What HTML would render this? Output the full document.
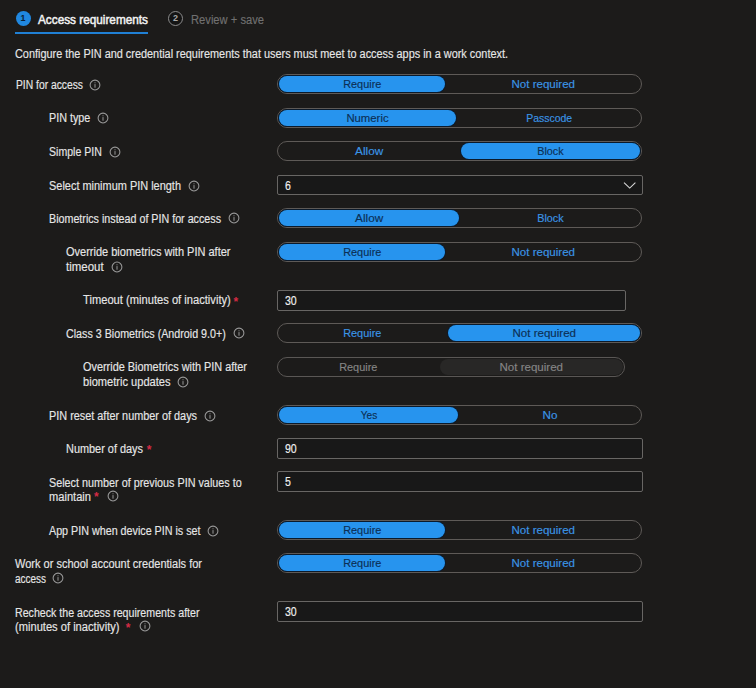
<!DOCTYPE html>
<html><head><meta charset="utf-8"><style>
html,body{margin:0;padding:0}
body{width:756px;height:688px;background:#1c1b1a;position:relative;overflow:hidden;font-family:"Liberation Sans",sans-serif}
.t{position:absolute;white-space:nowrap;line-height:14px;transform-origin:0 0;-webkit-text-stroke:0.15px currentColor}
.ic{position:absolute;width:9px;height:9px;border:1px solid #a8a8a8;border-radius:50%;box-sizing:content-box}
.ic:after{content:"";position:absolute;left:4px;top:3px;width:1px;height:4px;background:#a8a8a8}
.ic:before{content:"";position:absolute;left:4px;top:1.5px;width:1px;height:1px;background:#a8a8a8}
.st{position:absolute;color:#d52b45;font-size:12px;line-height:12px;font-weight:700}
.tg{position:absolute;height:18px;border:1px solid #5e5a57;border-radius:10px;box-sizing:content-box}
.pill{position:absolute;top:1px;height:16px;border-radius:8px;background:#2794ee;box-shadow:0 0 0 1px #0b1a2b}
.lab{position:absolute;top:0px;height:18px;line-height:18px;text-align:center;font-size:11px;color:#3b95e6;white-space:nowrap}
.lab span{display:inline-block;transform:scaleX(.9);-webkit-text-stroke:0.15px currentColor}
.in{position:absolute;height:19px;border:1px solid #686664;border-radius:2px;box-sizing:content-box;background:#181818}
.val{position:absolute;left:7px;top:1px;line-height:19px;font-size:12px;color:#f0f0f0;-webkit-text-stroke:0.15px currentColor;transform:scaleX(.88);transform-origin:0 0}
</style></head><body>

<div style="position:absolute;left:15.5px;top:11px;width:15px;height:15px;border-radius:50%;background:#2088e0"></div>
<div style="position:absolute;left:15.5px;top:10.5px;width:15px;height:15px;line-height:15px;text-align:center;font-size:9px;font-weight:700;color:#0a1f36">1</div>
<div style="position:absolute;left:15px;top:32px;width:133px;height:2px;background:#2080d4"></div>
<div style="position:absolute;left:168px;top:10.5px;width:13px;height:13px;border-radius:50%;border:1px solid #8c8c8c;box-sizing:content-box;background:#141414"></div>
<div style="position:absolute;left:168px;top:10.5px;width:15px;height:15px;line-height:15px;text-align:center;font-size:9px;color:#a8a8a8;font-weight:700">2</div>
<div class="t" style="left:38px;top:13.10px;font-size:13px;font-weight:400;color:#f2f2f2;transform:scaleX(0.9062);-webkit-text-stroke:.5px currentColor;">Access requirements</div>
<div class="t" style="left:191px;top:12.55px;font-size:12.5px;font-weight:400;color:#707070;transform:scaleX(0.8942);">Review + save</div>
<div class="t" style="left:15px;top:46.60px;font-size:12px;font-weight:400;color:#e6e6e6;transform:scaleX(0.9080);">Configure the PIN and credential requirements that users must meet to access apps in a work context.</div>
<div class="t" style="left:15.6px;top:78.00px;font-size:12px;font-weight:400;color:#e6e6e6;transform:scaleX(0.8586);">PIN for access</div>
<div class="t" style="left:48.9px;top:111.40px;font-size:12px;font-weight:400;color:#e6e6e6;transform:scaleX(0.8972);">PIN type</div>
<div class="t" style="left:48.9px;top:145.10px;font-size:12px;font-weight:400;color:#e6e6e6;transform:scaleX(0.8795);">Simple PIN</div>
<div class="t" style="left:49px;top:179.00px;font-size:12px;font-weight:400;color:#e6e6e6;transform:scaleX(0.9120);">Select minimum PIN length</div>
<div class="t" style="left:49px;top:211.80px;font-size:12px;font-weight:400;color:#e6e6e6;transform:scaleX(0.8923);">Biometrics instead of PIN for access</div>
<div class="t" style="left:66.1px;top:245.10px;font-size:12px;font-weight:400;color:#e6e6e6;transform:scaleX(0.9170);">Override biometrics with PIN after</div>
<div class="t" style="left:66px;top:260.10px;font-size:12px;font-weight:400;color:#e6e6e6;transform:scaleX(0.9553);">timeout</div>
<div class="t" style="left:82.8px;top:293.40px;font-size:12px;font-weight:400;color:#e6e6e6;transform:scaleX(0.9299);">Timeout (minutes of inactivity)</div>
<div class="t" style="left:66px;top:326.80px;font-size:12px;font-weight:400;color:#e6e6e6;transform:scaleX(0.8923);">Class 3 Biometrics (Android 9.0+)</div>
<div class="t" style="left:83px;top:360.10px;font-size:12px;font-weight:400;color:#e6e6e6;transform:scaleX(0.9075);">Override Biometrics with PIN after</div>
<div class="t" style="left:83px;top:375.00px;font-size:12px;font-weight:400;color:#e6e6e6;transform:scaleX(0.9248);">biometric updates</div>
<div class="t" style="left:48.9px;top:409.30px;font-size:12px;font-weight:400;color:#e6e6e6;transform:scaleX(0.9057);">PIN reset after number of days</div>
<div class="t" style="left:66.4px;top:441.80px;font-size:12px;font-weight:400;color:#e6e6e6;transform:scaleX(0.9091);">Number of days</div>
<div class="t" style="left:49px;top:475.50px;font-size:12px;font-weight:400;color:#e6e6e6;transform:scaleX(0.9000);">Select number of previous PIN values to</div>
<div class="t" style="left:49px;top:489.80px;font-size:12px;font-weight:400;color:#e6e6e6;transform:scaleX(0.9259);">maintain</div>
<div class="t" style="left:49px;top:524.00px;font-size:12px;font-weight:400;color:#e6e6e6;transform:scaleX(0.8942);">App PIN when device PIN is set</div>
<div class="t" style="left:14.8px;top:556.80px;font-size:12px;font-weight:400;color:#e6e6e6;transform:scaleX(0.9172);">Work or school account credentials for</div>
<div class="t" style="left:15px;top:571.70px;font-size:12px;font-weight:400;color:#e6e6e6;transform:scaleX(0.8298);">access</div>
<div class="t" style="left:15px;top:605.60px;font-size:12px;font-weight:400;color:#e6e6e6;transform:scaleX(0.8866);">Recheck the access requirements after</div>
<div class="t" style="left:15px;top:619.60px;font-size:12px;font-weight:400;color:#e6e6e6;transform:scaleX(0.9272);">(minutes of inactivity)</div>
<svg style="position:absolute;left:89.15px;top:78.60px" width="12" height="12" viewBox="0 0 12 12"><circle cx="6" cy="6" r="4.9" stroke="#9a9a9a" stroke-width="1.05" fill="none"/><rect x="5.45" y="5.1" width="1.1" height="3.6" fill="#8c8c8c"/><rect x="5.45" y="3.2" width="1.1" height="1.1" fill="#7a7a7a"/></svg>
<svg style="position:absolute;left:97.10px;top:112.00px" width="12" height="12" viewBox="0 0 12 12"><circle cx="6" cy="6" r="4.9" stroke="#9a9a9a" stroke-width="1.05" fill="none"/><rect x="5.45" y="5.1" width="1.1" height="3.6" fill="#8c8c8c"/><rect x="5.45" y="3.2" width="1.1" height="1.1" fill="#7a7a7a"/></svg>
<svg style="position:absolute;left:108.55px;top:145.60px" width="12" height="12" viewBox="0 0 12 12"><circle cx="6" cy="6" r="4.9" stroke="#9a9a9a" stroke-width="1.05" fill="none"/><rect x="5.45" y="5.1" width="1.1" height="3.6" fill="#8c8c8c"/><rect x="5.45" y="3.2" width="1.1" height="1.1" fill="#7a7a7a"/></svg>
<svg style="position:absolute;left:187.90px;top:179.60px" width="12" height="12" viewBox="0 0 12 12"><circle cx="6" cy="6" r="4.9" stroke="#9a9a9a" stroke-width="1.05" fill="none"/><rect x="5.45" y="5.1" width="1.1" height="3.6" fill="#8c8c8c"/><rect x="5.45" y="3.2" width="1.1" height="1.1" fill="#7a7a7a"/></svg>
<svg style="position:absolute;left:228.15px;top:212.40px" width="12" height="12" viewBox="0 0 12 12"><circle cx="6" cy="6" r="4.9" stroke="#9a9a9a" stroke-width="1.05" fill="none"/><rect x="5.45" y="5.1" width="1.1" height="3.6" fill="#8c8c8c"/><rect x="5.45" y="3.2" width="1.1" height="1.1" fill="#7a7a7a"/></svg>
<svg style="position:absolute;left:110.85px;top:260.60px" width="12" height="12" viewBox="0 0 12 12"><circle cx="6" cy="6" r="4.9" stroke="#9a9a9a" stroke-width="1.05" fill="none"/><rect x="5.45" y="5.1" width="1.1" height="3.6" fill="#8c8c8c"/><rect x="5.45" y="3.2" width="1.1" height="1.1" fill="#7a7a7a"/></svg>
<svg style="position:absolute;left:232.75px;top:327.40px" width="12" height="12" viewBox="0 0 12 12"><circle cx="6" cy="6" r="4.9" stroke="#9a9a9a" stroke-width="1.05" fill="none"/><rect x="5.45" y="5.1" width="1.1" height="3.6" fill="#8c8c8c"/><rect x="5.45" y="3.2" width="1.1" height="1.1" fill="#7a7a7a"/></svg>
<svg style="position:absolute;left:177.30px;top:375.60px" width="12" height="12" viewBox="0 0 12 12"><circle cx="6" cy="6" r="4.9" stroke="#9a9a9a" stroke-width="1.05" fill="none"/><rect x="5.45" y="5.1" width="1.1" height="3.6" fill="#8c8c8c"/><rect x="5.45" y="3.2" width="1.1" height="1.1" fill="#7a7a7a"/></svg>
<svg style="position:absolute;left:203.70px;top:409.90px" width="12" height="12" viewBox="0 0 12 12"><circle cx="6" cy="6" r="4.9" stroke="#9a9a9a" stroke-width="1.05" fill="none"/><rect x="5.45" y="5.1" width="1.1" height="3.6" fill="#8c8c8c"/><rect x="5.45" y="3.2" width="1.1" height="1.1" fill="#7a7a7a"/></svg>
<svg style="position:absolute;left:107.20px;top:490.40px" width="12" height="12" viewBox="0 0 12 12"><circle cx="6" cy="6" r="4.9" stroke="#9a9a9a" stroke-width="1.05" fill="none"/><rect x="5.45" y="5.1" width="1.1" height="3.6" fill="#8c8c8c"/><rect x="5.45" y="3.2" width="1.1" height="1.1" fill="#7a7a7a"/></svg>
<svg style="position:absolute;left:207.05px;top:524.60px" width="12" height="12" viewBox="0 0 12 12"><circle cx="6" cy="6" r="4.9" stroke="#9a9a9a" stroke-width="1.05" fill="none"/><rect x="5.45" y="5.1" width="1.1" height="3.6" fill="#8c8c8c"/><rect x="5.45" y="3.2" width="1.1" height="1.1" fill="#7a7a7a"/></svg>
<svg style="position:absolute;left:52.45px;top:572.30px" width="12" height="12" viewBox="0 0 12 12"><circle cx="6" cy="6" r="4.9" stroke="#9a9a9a" stroke-width="1.05" fill="none"/><rect x="5.45" y="5.1" width="1.1" height="3.6" fill="#8c8c8c"/><rect x="5.45" y="3.2" width="1.1" height="1.1" fill="#7a7a7a"/></svg>
<svg style="position:absolute;left:138.60px;top:620.20px" width="12" height="12" viewBox="0 0 12 12"><circle cx="6" cy="6" r="4.9" stroke="#9a9a9a" stroke-width="1.05" fill="none"/><rect x="5.45" y="5.1" width="1.1" height="3.6" fill="#8c8c8c"/><rect x="5.45" y="3.2" width="1.1" height="1.1" fill="#7a7a7a"/></svg>
<div class="st" style="left:233.5px;top:295.5px">*</div>
<div class="st" style="left:146.8px;top:443.5px">*</div>
<div class="st" style="left:94px;top:491px">*</div>
<div class="st" style="left:125.8px;top:621.5px">*</div>
<div class="tg" style="left:277px;top:74px;width:363px;">
<div class="pill" style="left:1px;width:166px;background:#2794ee"></div>
<div class="lab" style="left:0px;width:168px;color:#0c2f55"><span style="transform:scaleX(0.99)">Require</span></div>
<div class="lab" style="left:168px;width:195px;color:#3b95e6"><span style="transform:scaleX(1.05)">Not required</span></div>
</div>
<div class="tg" style="left:277px;top:107.5px;width:363px;">
<div class="pill" style="left:1px;width:177px;background:#2794ee"></div>
<div class="lab" style="left:0px;width:179px;color:#0c2f55"><span style="transform:scaleX(1.03)">Numeric</span></div>
<div class="lab" style="left:179px;width:184px;color:#3b95e6"><span style="transform:scaleX(0.95)">Passcode</span></div>
</div>
<div class="tg" style="left:277px;top:141px;width:363px;">
<div class="pill" style="left:183px;width:179px;background:#2794ee"></div>
<div class="lab" style="left:0px;width:182px;color:#3b95e6"><span style="transform:scaleX(1.07)">Allow</span></div>
<div class="lab" style="left:182px;width:181px;color:#0c2f55"><span style="transform:scaleX(0.98)">Block</span></div>
</div>
<div class="tg" style="left:277px;top:208px;width:363px;">
<div class="pill" style="left:1px;width:179.5px;background:#2794ee"></div>
<div class="lab" style="left:0px;width:181.5px;color:#0c2f55"><span style="transform:scaleX(1.07)">Allow</span></div>
<div class="lab" style="left:181.5px;width:181.5px;color:#3b95e6"><span style="transform:scaleX(0.98)">Block</span></div>
</div>
<div class="tg" style="left:277px;top:241.5px;width:363px;">
<div class="pill" style="left:1px;width:166px;background:#2794ee"></div>
<div class="lab" style="left:0px;width:168px;color:#0c2f55"><span style="transform:scaleX(0.99)">Require</span></div>
<div class="lab" style="left:168px;width:195px;color:#3b95e6"><span style="transform:scaleX(1.05)">Not required</span></div>
</div>
<div class="tg" style="left:277px;top:323px;width:363px;">
<div class="pill" style="left:170px;width:192px;background:#2794ee"></div>
<div class="lab" style="left:0px;width:169px;color:#3b95e6"><span style="transform:scaleX(0.99)">Require</span></div>
<div class="lab" style="left:169px;width:194px;color:#0c2f55"><span style="transform:scaleX(1.05)">Not required</span></div>
</div>
<div class="tg" style="left:277px;top:357px;width:346px;border-color:#5a5755;">
<div class="pill" style="left:162px;width:183px;background:#282726;box-shadow:none"></div>
<div class="lab" style="left:0px;width:161px;color:#858585"><span style="transform:scaleX(0.99)">Require</span></div>
<div class="lab" style="left:161px;width:185px;color:#858585"><span style="transform:scaleX(1.05)">Not required</span></div>
</div>
<div class="tg" style="left:277px;top:405px;width:363px;">
<div class="pill" style="left:1px;width:179.3px;background:#2794ee"></div>
<div class="lab" style="left:0px;width:181.3px;color:#0c2f55"><span style="transform:scaleX(0.92)">Yes</span></div>
<div class="lab" style="left:181.3px;width:181.7px;color:#3b95e6"><span style="transform:scaleX(1.06)">No</span></div>
</div>
<div class="tg" style="left:277px;top:520px;width:363px;">
<div class="pill" style="left:1px;width:166px;background:#2794ee"></div>
<div class="lab" style="left:0px;width:168px;color:#0c2f55"><span style="transform:scaleX(0.99)">Require</span></div>
<div class="lab" style="left:168px;width:195px;color:#3b95e6"><span style="transform:scaleX(1.05)">Not required</span></div>
</div>
<div class="tg" style="left:277px;top:553px;width:363px;">
<div class="pill" style="left:1px;width:166px;background:#2794ee"></div>
<div class="lab" style="left:0px;width:168px;color:#0c2f55"><span style="transform:scaleX(0.99)">Require</span></div>
<div class="lab" style="left:168px;width:195px;color:#3b95e6"><span style="transform:scaleX(1.05)">Not required</span></div>
</div>
<div class="in" style="left:277px;top:175px;width:364px;height:18px"><div class="val" style="line-height:18px">6</div>
<svg style="position:absolute;left:345px;top:5px" width="14" height="9" viewBox="0 0 14 9"><path d="M1 1.7 L6.7 7.1 L12.4 1.7" stroke="#d8d8d8" stroke-width="1.1" fill="none"/></svg>
</div>
<div class="in" style="left:277px;top:290px;width:347px"><div class="val">30</div>
</div>
<div class="in" style="left:277px;top:438px;width:364px"><div class="val">90</div>
</div>
<div class="in" style="left:277px;top:471px;width:364px"><div class="val">5</div>
</div>
<div class="in" style="left:277px;top:601.3px;width:364px"><div class="val">30</div>
</div>
</body></html>
